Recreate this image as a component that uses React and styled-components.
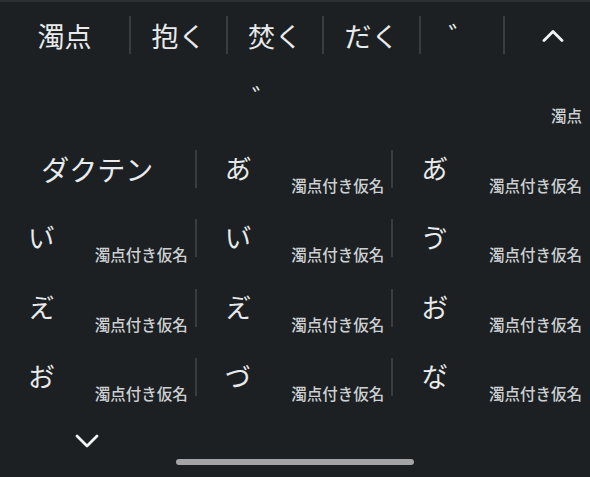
import React from 'react';
import styled, { createGlobalStyle } from 'styled-components';

const GlobalStyle = createGlobalStyle`
    html, body {
        margin: 0;
        padding: 0;
        background: #1c2022;
    }
    body {
        font-family: "Noto Sans CJK JP", "Noto Sans", sans-serif;
        color: #e6e8e9;
    }
`;

const Keyboard = styled.div`
    width: 590px;
    height: 477px;
    display: flex;
    flex-direction: column;
    background: #1c2022;
    border-top: 2px solid #2a2f31;
    box-sizing: border-box;
    overflow: hidden;
`;

const TopBar = styled.div`
    height: 66px;
    display: flex;
    align-items: center;
`;

const TopItem = styled.div`
    width: ${({ w }) => w}px;
    flex: ${({ grow }) => (grow ? '1' : 'none')};
    display: flex;
    justify-content: center;
    align-items: center;
    padding-left: ${({ shift }) => shift || 0}px;
    font-size: 27px;
    line-height: 1;
    color: #e8eaeb;
`;

const Divider = styled.div`
    width: 2px;
    height: 38px;
    background: #383d3f;
    flex: none;
    align-self: ${({ top }) => (top ? 'flex-start' : 'center')};
    margin-top: ${({ top }) => (top ? '5px' : '0')};
`;

const HeadRow = styled.div`
    height: 77px;
    display: flex;
`;

const HeadMark = styled.div`
    font-size: 26px;
    line-height: 1;
    padding-left: 252px;
    padding-top: 16px;
`;

const HeadNote = styled.div`
    margin-left: auto;
    align-self: flex-end;
    margin-right: 8px;
    margin-bottom: 22px;
    font-size: 15.5px;
    font-weight: 500;
    line-height: 1;
    color: #cdd0d2;
`;

const Grid = styled.div`
    display: grid;
    grid-template-columns: repeat(3, 1fr);
    grid-auto-rows: 69.3px;
`;

const Cell = styled.div`
    display: flex;
    align-items: flex-start;
    justify-content: ${({ center }) => (center ? 'center' : 'flex-start')};
    padding-left: ${({ center }) => (center ? '0' : '28px')};
    box-sizing: border-box;
`;

const Word = styled.div`
    font-size: ${({ big }) => (big ? 28 : 26)}px;
    line-height: 1;
    margin-top: 10px;
    color: #e8eaeb;
    ${({ big }) => big && 'flex: 1; text-align: center;'}
`;

const Note = styled.div`
    margin-left: auto;
    margin-top: 33px;
    margin-right: ${({ last }) => (last ? '8px' : '7px')};
    font-size: 15.5px;
    font-weight: 500;
    line-height: 1;
    white-space: nowrap;
    color: #cdd0d2;
`;

const Footer = styled.div`
    flex: 1;
    display: flex;
    flex-direction: column;
`;

const ChevronRow = styled.div`
    padding-left: 75px;
    padding-top: 7px;
    height: 14px;
`;

const HomeBar = styled.div`
    width: 238px;
    height: 6px;
    border-radius: 3px;
    background: #a3a5a7;
    margin: 16px auto 0;
`;

const ChevronUp = () => (
    <svg width="22" height="13" viewBox="0 0 22 13">
        <path d="M2 11.5 L11 2.5 L20 11.5" fill="none" stroke="#f2f3f4" strokeWidth="2.8" strokeLinecap="round" strokeLinejoin="round" />
    </svg>
);

const ChevronDown = () => (
    <svg width="24" height="14" viewBox="0 0 24 14">
        <path d="M2 2 L12 12 L22 2" fill="none" stroke="#f2f3f4" strokeWidth="2.8" strokeLinecap="round" strokeLinejoin="round" />
    </svg>
);

const topWords = [
    { text: '濁点', w: 129 },
    { text: '抱く', w: 95 },
    { text: '焚く', w: 94 },
    { text: 'だく', w: 95 },
    { text: '゛', w: 82 },
];

const NOTE = '濁点付き仮名';

const rows = [
    [{ text: 'ダクテン', big: true }, { text: 'あ゙' }, { text: 'あ゙' }],
    [{ text: 'い゙' }, { text: 'い゙' }, { text: 'ゔ' }],
    [{ text: 'え゙' }, { text: 'え゙' }, { text: 'お゙' }],
    [{ text: 'お゙' }, { text: 'づ' }, { text: 'な゙' }],
];

const App = () => {
    return (
        <>
            <GlobalStyle />
            <Keyboard>
                <TopBar>
                    {topWords.map((item) => (
                        <React.Fragment key={item.text}>
                            <TopItem w={item.w}>{item.text}</TopItem>
                            <Divider />
                        </React.Fragment>
                    ))}
                    <TopItem grow shift={11}>
                        <ChevronUp />
                    </TopItem>
                </TopBar>
                <HeadRow>
                    <HeadMark>゛</HeadMark>
                    <HeadNote>濁点</HeadNote>
                </HeadRow>
                <Grid>
                    {rows.map((row, r) =>
                        row.map((cell, c) => (
                            <Cell key={`${r}-${c}`} center={cell.big}>
                                <Word big={cell.big}>{cell.text}</Word>
                                {!cell.big && <Note last={c === 2}>{NOTE}</Note>}
                                {c < 2 && <Divider top />}
                            </Cell>
                        ))
                    )}
                </Grid>
                <Footer>
                    <ChevronRow>
                        <ChevronDown />
                    </ChevronRow>
                    <HomeBar />
                </Footer>
            </Keyboard>
        </>
    );
};

export default App;
